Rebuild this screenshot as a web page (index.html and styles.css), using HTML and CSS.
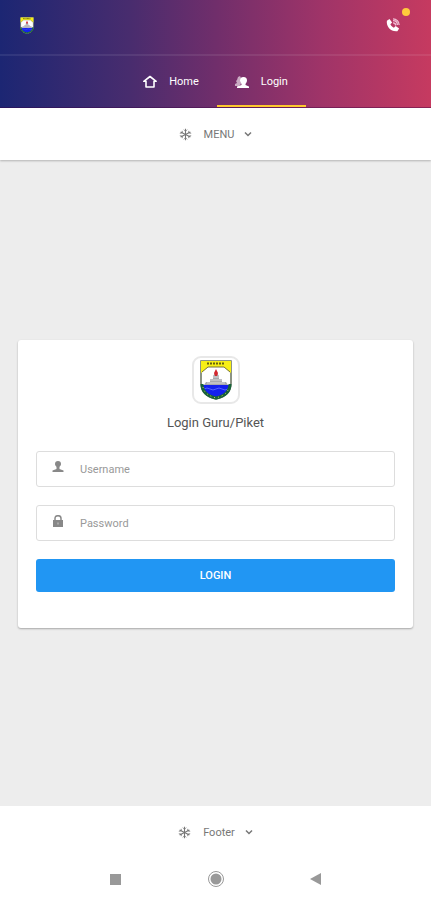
FILE: index.html
```html
<!DOCTYPE html>
<html lang="id">
<head>
    <meta charset="UTF-8">
    <meta name="viewport" content="width=device-width, initial-scale=1.0">
    <title>Login Guru/Piket</title>
    <link rel="stylesheet" href="styles.css">
</head>
<body>
    <!-- Shared icons -->
    <svg class="sprite" aria-hidden="true">
        <symbol id="crest" viewBox="0 0 32 40">
            <path d="M1 1h30v22c0 10-6 14-15 16C7 37 1 33 1 23z" fill="#fff" stroke="#66705c" stroke-width="1.5"/>
            <path d="M1 1h30v12l-7-6H8l-7 6z" fill="#f7ef16"/>
            <path d="M7 3.5h18" stroke="#65620e" stroke-width="2" stroke-dasharray="2 1"/>
            <path d="M2 12l6-5h16l6 5" fill="none" stroke="#77743c"/>
            <path d="M2 25h28c-1 7-6 11-14 13C8 36 3 32 2 25z" fill="#1420ee"/>
            <path d="M4 29q3-2 6 0t6 0 6 0 6 0" fill="none" stroke="#5262ff"/>
            <path d="M15 13h2l2 3v3h3v3h4l2 3H4l2-3h4v-3h3v-3z" fill="#a8a8ac"/>
            <path d="M13 17h6M10 20h12M7 23h18" stroke="#d8d8da"/>
            <path d="M16 9l2 4-1 3h-2l-1-3z" fill="#d32730"/>
            <path d="M2 24c0 8 5 12 14 14 9-2 14-6 14-14" fill="none" stroke="#17633a" stroke-width="3"/>
            <path d="M3 27c1 6 6 9 13 11 7-2 12-5 13-11" fill="none" stroke="#c6c653" stroke-dasharray="1 3"/>
        </symbol>
        <symbol id="snow" viewBox="0 0 16 16">
            <path d="M8 1v14M2 5l12 6M14 5L2 11" fill="none" stroke="currentColor" stroke-width="1.300"/>
            <path d="M6 2l2 2 2-2M6 14l2-2 2 2M1 6.500l3-.5V3.500M15 6.500l-3-.5V3.500M1 9.500l3 .5v2.500M15 9.500l-3 .5v2.500" fill="none" stroke="currentColor"/>
        </symbol>
        <symbol id="chevron" viewBox="0 0 8 8">
            <path d="M1 2.500l3 3 3-3" fill="none" stroke="currentColor" stroke-width="1.500"/>
        </symbol>
    </svg>

    <header class="header">
        <div class="topbar">
            <a class="brand" href="#" aria-label="Beranda"><svg><use href="#crest"/></svg></a>
            <a class="phone" href="#" aria-label="Telepon">
                <svg viewBox="0 0 16 16">
                    <path d="M1 3l3-2 3 4-2 2c1 2 2 3 4 4l2-2 4 3-2 3C6 16 0 10 1 3z" fill="#fff"/>
                    <path d="M8 5.500c2 0 3 1 3 3M8 3c3 0 5 2 5 5M8 1c4 0 7 3 7 7" fill="none" stroke="#f0bdd2" stroke-width="1.500"/>
                </svg>
                <span class="dot"></span>
            </a>
        </div>
        <nav class="tabs">
            <a class="tab" href="#">
                <svg viewBox="0 0 14 14"><path d="M7 1.500L.8 6.300H3V12h8V6.300h2.200z" fill="none" stroke="currentColor" stroke-width="1.600" stroke-linejoin="round"/></svg>
                Home
            </a>
            <a class="tab active" href="#">
                <svg viewBox="0 0 14 14">
                    <path d="M3 2l2-1 1 2-1 2 1 4-2 2H0V9l2-1-1-2 1-1z" fill="currentColor" opacity=".6"/>
                    <path d="M8.500 2C11 2 12 3.500 12 5.500c0 1.500-1 2.500-1.500 3.500v1l3.500 1.500V13H2v-1.500L6.500 10V9C6 8 5 7 5 5.500 5 3.500 6 2 8.500 2z" fill="currentColor"/>
                </svg>
                Login
            </a>
        </nav>
    </header>

    <div class="bar menu-bar">
        <button class="toggle" type="button">
            <svg class="icon"><use href="#snow"/></svg>
            <span>MENU</span>
            <svg class="arrow"><use href="#chevron"/></svg>
        </button>
    </div>

    <main class="content">
        <form class="card">
            <div class="logo"><svg><use href="#crest"/></svg></div>
            <h1 class="title">Login Guru/Piket</h1>
            <div class="field">
                <label for="username" aria-label="Username">
                    <svg viewBox="0 0 12 12"><path d="M6 0c2 0 3 1 3 3 0 1.500-1 2-1.500 3v2l4 1.500V11H.5V9.500l4-1.500V6C4 5 3 4.500 3 3c0-2 1-3 3-3z" fill="currentColor"/></svg>
                </label>
                <input type="text" id="username" placeholder="Username">
            </div>
            <div class="field">
                <label for="password" aria-label="Password">
                    <svg viewBox="0 0 12 12"><path d="M3 6V3.500C3 1.500 4 .7 6 .7s3 .8 3 2.800V6" fill="none" stroke="currentColor" stroke-width="1.500"/><path d="M1 5h10v7H1z" fill="currentColor"/><path d="M6 7.500v2" stroke="#ccc"/></svg>
                </label>
                <input type="password" id="password" placeholder="Password">
            </div>
            <button class="submit" type="submit">LOGIN</button>
        </form>
    </main>

    <footer class="bar footer-bar">
        <button class="toggle" type="button">
            <svg class="icon"><use href="#snow"/></svg>
            <span>Footer</span>
            <svg class="arrow"><use href="#chevron"/></svg>
        </button>
    </footer>

    <div class="system-nav">
        <button type="button" aria-label="Recent apps"><svg viewBox="0 0 18 18"><path d="M3 4h11v11H3z" fill="#999"/></svg></button>
        <button type="button" aria-label="Home screen"><svg viewBox="0 0 18 18"><circle cx="9" cy="9" r="7.500" fill="none" stroke="#999"/><circle cx="9" cy="9" r="5.500" fill="#999"/></svg></button>
        <button type="button" aria-label="Back"><svg viewBox="0 0 18 18"><path d="M14 3v12L3 9z" fill="#999"/></svg></button>
    </div>
</body>
</html>
```
FILE: styles.css
```css
* {
    box-sizing: border-box;
}
body {
    margin: 0;
    min-height: 100vh;
    display: flex;
    flex-direction: column;
    background-color: #ededed;
    color: #555;
    font-family: Roboto, sans-serif;
    font-size: 11px;
}
svg {
    display: block;
}
button,
input {
    font: inherit;
}
.sprite {
    display: none;
}
.header {
    background: linear-gradient(to right, #1c2673, #482c6e 30%, #702e6b 50%, #a03468 75%, #c63a60);
    color: #fff;
    border-bottom: 1px solid rgba(60, 0, 70, 0.4);
}
.topbar {
    display: flex;
    justify-content: space-between;
    align-items: center;
    height: 56px;
    padding: 0 27px 4px 20px;
    border-bottom: 2px solid rgba(255, 255, 255, 0.08);
}
.brand svg {
    width: 14px;
    height: 17px;
}
.phone {
    position: relative;
    padding: 4px;
}
.phone svg {
    width: 14px;
    height: 14px;
}
.dot {
    position: absolute;
    top: -6px;
    right: -6px;
    width: 8px;
    height: 8px;
    border-radius: 50%;
    background-color: #ffca3c;
}
.tabs {
    display: flex;
    justify-content: center;
    height: 51px;
}
.tab {
    display: flex;
    align-items: center;
    gap: 12px;
    padding: 2px 18px 0;
    border-bottom: 2px solid transparent;
    color: #fff;
    text-decoration: none;
}
.tab svg {
    width: 14px;
    height: 14px;
}
.tab.active {
    border-bottom-color: #fdc92d;
}
.bar {
    display: flex;
    justify-content: center;
    height: 52px;
    background-color: #fff;
}
.menu-bar {
    box-shadow: 0 1px 2px rgba(0, 0, 0, 0.25);
}
.toggle {
    display: flex;
    align-items: center;
    padding: 0 18px;
    border: 0;
    background: none;
    color: #777;
}
.toggle span {
    margin: 0 10px 0 12px;
}
.icon {
    width: 13px;
    height: 13px;
}
.arrow {
    width: 8px;
    height: 8px;
}
.content {
    flex: 1;
    display: flex;
    align-items: center;
    padding: 2px 18px 0;
}
.card {
    flex: 1;
    display: flex;
    flex-direction: column;
    gap: 18px;
    padding: 16px 18px 36px;
    border-radius: 3px;
    background-color: #fff;
    box-shadow: 0 1px 2px rgba(0, 0, 0, 0.3);
}
.logo {
    align-self: center;
    padding: 2px 6px;
    border: 2px solid #e8e8e8;
    border-radius: 9px;
}
.logo svg {
    width: 32px;
    height: 40px;
}
.title {
    margin: -8px 0 2px;
    font-size: 13px;
    font-weight: 400;
    line-height: 17px;
    text-align: center;
}
.field {
    display: flex;
    align-items: center;
    height: 36px;
    border: 1px solid #ddd;
    border-radius: 3px;
}
.field label {
    padding: 0 16px 4px 15px;
    color: #888;
}
.field svg {
    width: 12px;
    height: 12px;
}
.field input {
    flex: 1;
    min-width: 0;
    padding: 0;
    border: 0;
    outline: 0;
    background: none;
}
.field input::placeholder {
    color: #999;
}
.submit {
    height: 33px;
    border: 0;
    border-radius: 3px;
    background-color: #2196f3;
    color: #fff;
    font-size: 11px;
    font-weight: 500;
}
.system-nav {
    display: flex;
    justify-content: center;
    gap: 82px;
    padding: 12px 0;
    background-color: #fff;
}
.system-nav button {
    padding: 0;
    border: 0;
    background: none;
}
.system-nav svg {
    width: 18px;
    height: 18px;
}
```
